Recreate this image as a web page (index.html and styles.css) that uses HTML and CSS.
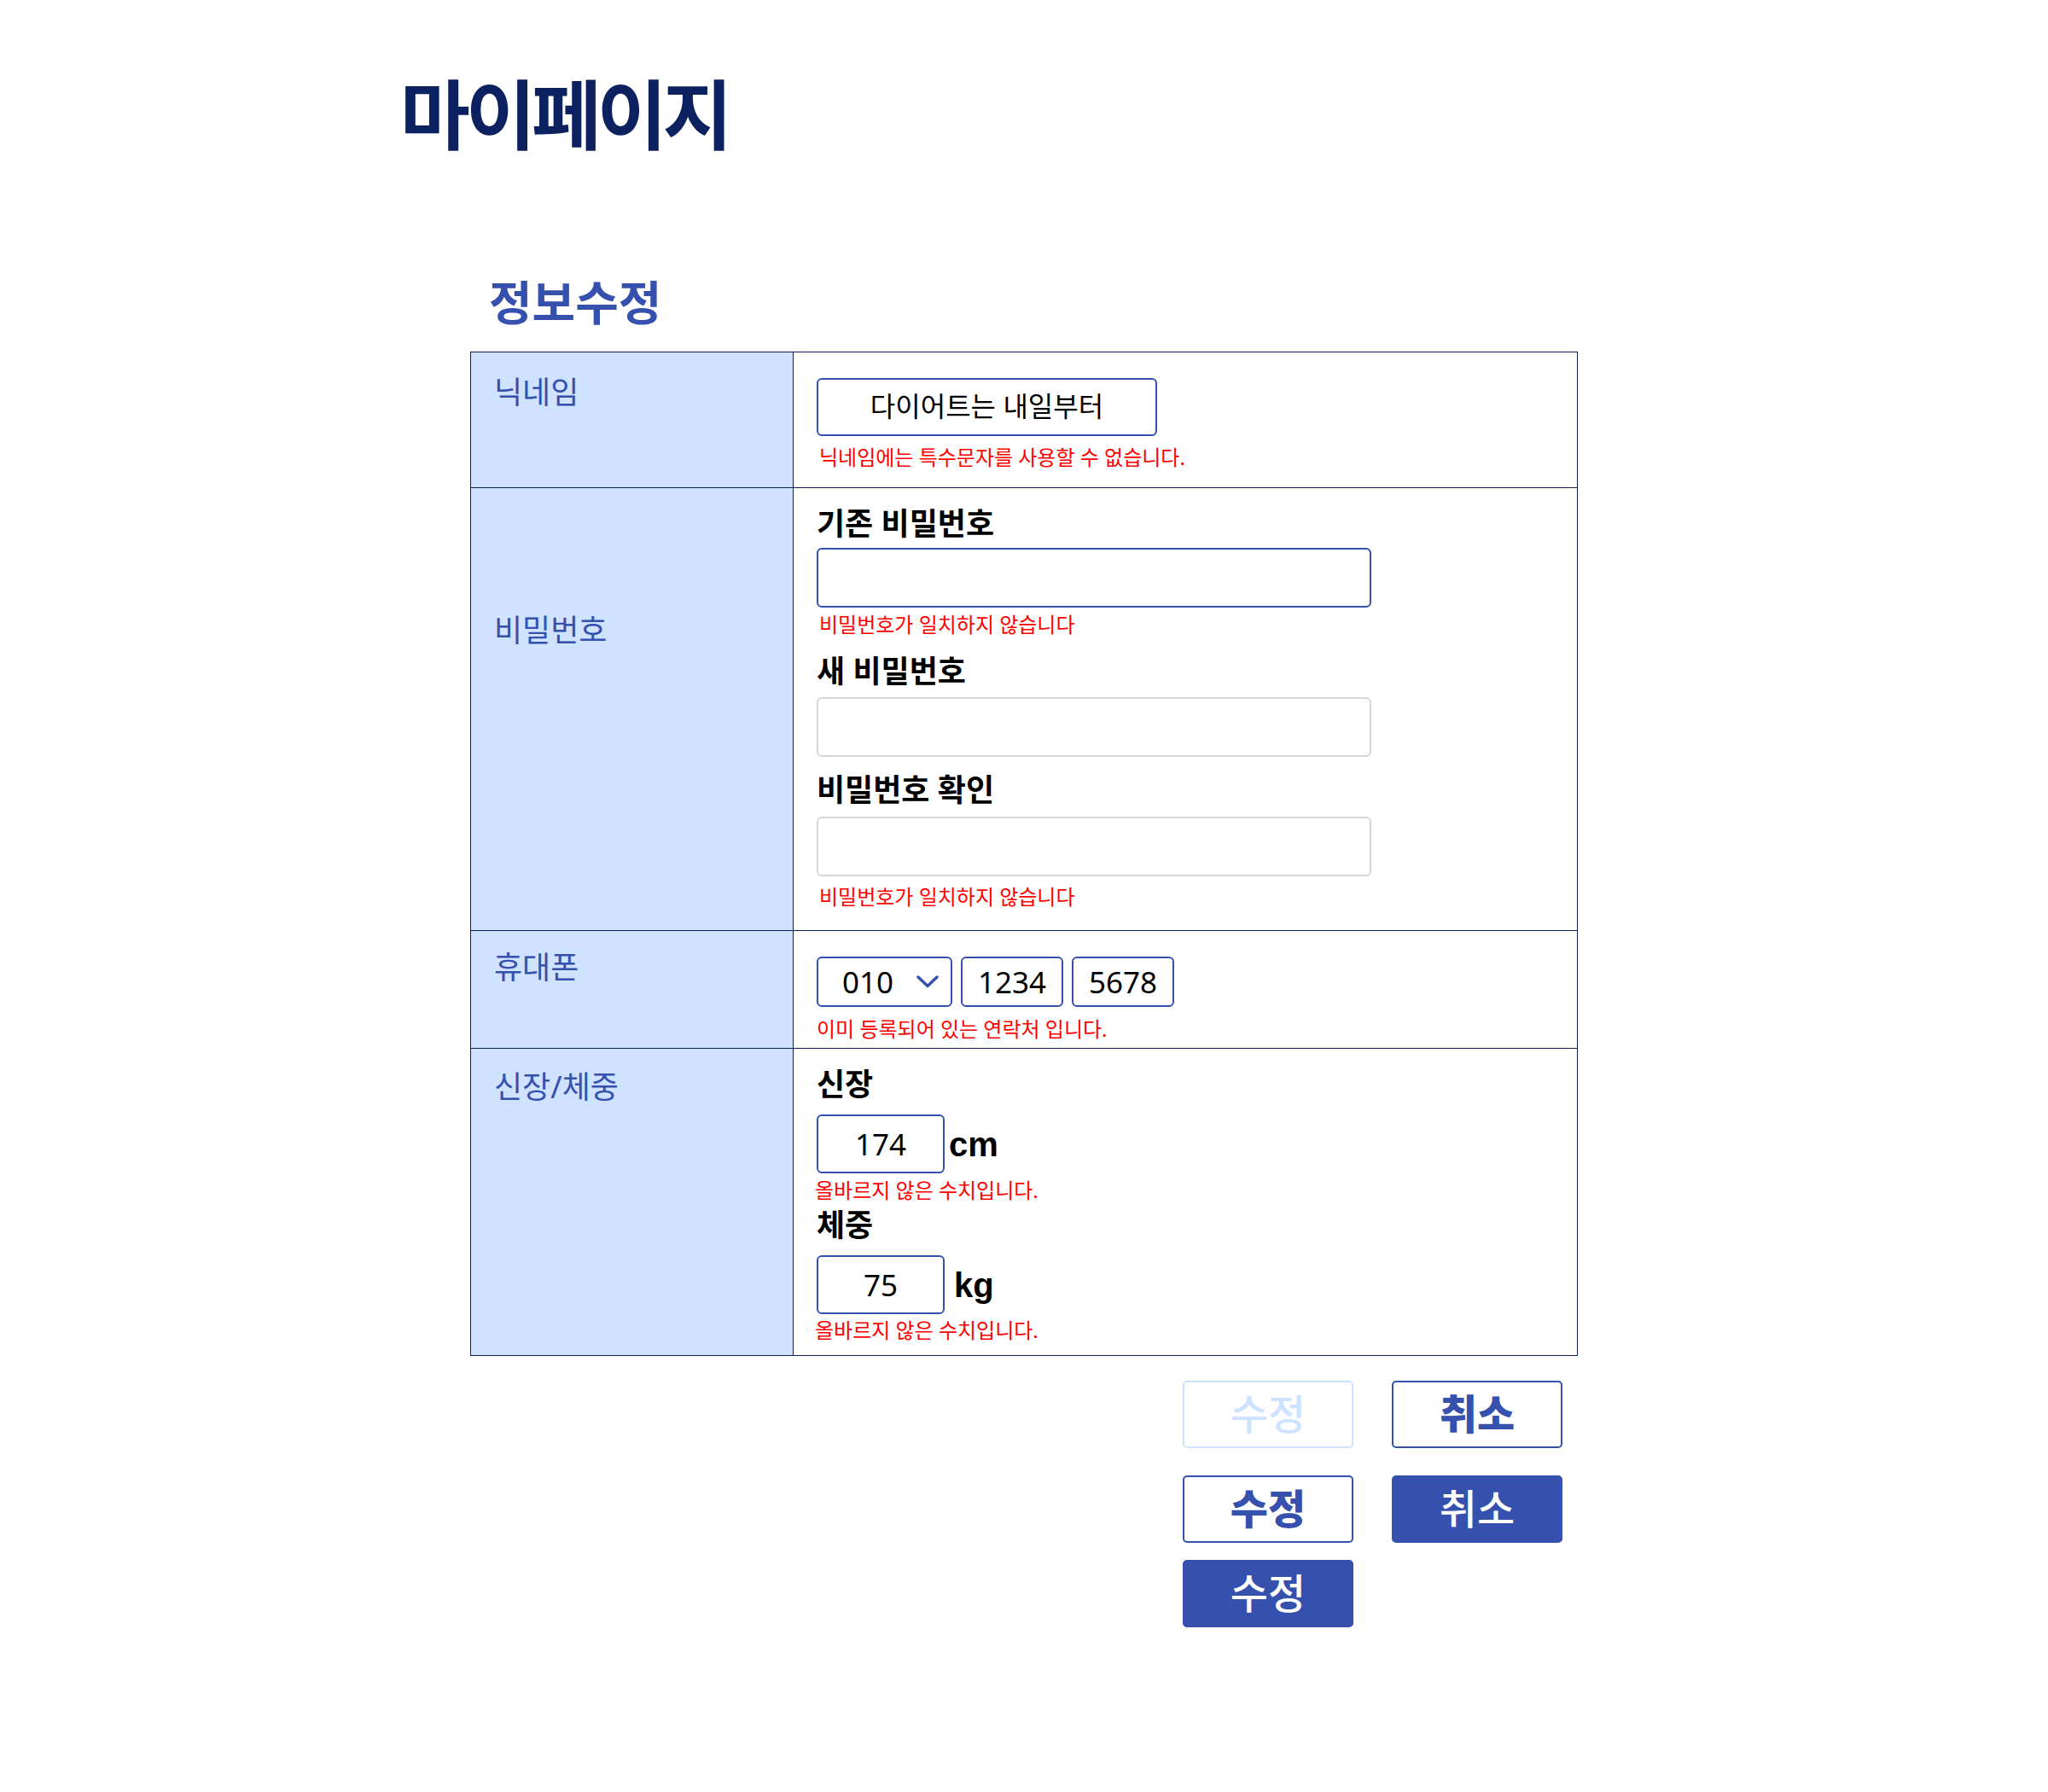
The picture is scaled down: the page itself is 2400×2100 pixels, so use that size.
FILE: index.html
```html
<!DOCTYPE html>
<html lang="ko">
<head>
<meta charset="utf-8">
<title>마이페이지</title>
<link rel="stylesheet" href="styles.css">
</head>
<body>
<div class="page">
  <h1 class="page-title">마이페이지</h1>

  <div class="edit">
    <h2 class="edit-title">정보수정</h2>

    <table class="info">
      <colgroup><col class="col-label"><col></colgroup>

      <tr class="row-nick">
        <th>닉네임</th>
        <td>
          <input class="field field-nick" type="text" value="다이어트는 내일부터">
          <p class="error error-nick">닉네임에는 특수문자를 사용할 수 없습니다.</p>
        </td>
      </tr>

      <tr class="row-pw">
        <th>비밀번호</th>
        <td>
          <p class="field-label">기존 비밀번호</p>
          <input class="field field-pw field-pw-first" type="password">
          <p class="error error-pw">비밀번호가 일치하지 않습니다</p>
          <p class="field-label field-label-next">새 비밀번호</p>
          <input class="field field-pw field-idle" type="password">
          <p class="field-label field-label-confirm">비밀번호 확인</p>
          <input class="field field-pw field-pw-last field-idle" type="password">
          <p class="error error-pw error-pw-last">비밀번호가 일치하지 않습니다</p>
        </td>
      </tr>

      <tr class="row-phone">
        <th>휴대폰</th>
        <td>
          <div class="phone">
            <div class="field phone-select">
              <span>010</span>
              <svg width="26" height="15" viewBox="0 0 26 15"><polyline points="2,2 13,12.5 24,2" fill="none" stroke="#3550ad" stroke-width="3.4" stroke-linecap="round" stroke-linejoin="round"/></svg>
            </div>
            <input class="field phone-part" type="text" value="1234">
            <input class="field phone-part" type="text" value="5678">
          </div>
          <p class="error error-phone">이미 등록되어 있는 연락처 입니다.</p>
        </td>
      </tr>

      <tr class="row-body">
        <th>신장/체중</th>
        <td>
          <p class="field-label">신장</p>
          <div class="measure">
            <input class="field field-num" type="text" value="174">
            <span class="unit">cm</span>
          </div>
          <p class="error error-num">올바르지 않은 수치입니다.</p>
          <p class="field-label field-label-weight">체중</p>
          <div class="measure">
            <input class="field field-num" type="text" value="75">
            <span class="unit unit-kg">kg</span>
          </div>
          <p class="error error-num error-num-last">올바르지 않은 수치입니다.</p>
        </td>
      </tr>
    </table>

    <div class="actions">
      <button class="btn btn-disabled btn-top" type="button">수정</button>
      <button class="btn btn-outline btn-top" type="button">취소</button>
      <button class="btn btn-outline" type="button">수정</button>
      <button class="btn btn-fill" type="button">취소</button>
      <button class="btn btn-fill" type="button">수정</button>
    </div>
  </div>
</div>
</body>
</html>
```

FILE: styles.css
```css
body {
  margin: 0;
  font-family: "Noto Sans", "Noto Sans CJK KR", sans-serif;
  color: #000;
  background: #fff;
}

.page {
  padding: 83px 0 120px 469px;
}

.page-title {
  margin: 0;
  font-size: 89px;
  line-height: 101px;
  font-weight: 700;
  letter-spacing: -5px;
  color: #0c2160;
}

.edit {
  width: 1298px;
  margin: 137px 0 0 82px;
}

.edit-title {
  margin: 0 0 25px 22px;
  font-size: 55px;
  line-height: 66px;
  font-weight: 700;
  color: #3550ad;
}

/* table */
.info {
  width: 1298px;
  table-layout: fixed;
  border-collapse: collapse;
  border: 1px solid #0a1f5c;
}

.col-label {
  width: 378px;
}

.info th,
.info td {
  border: 1px solid #0a1f5c;
  vertical-align: top;
  text-align: left;
  padding: 0 27px;
}

.info th {
  background: #cfe2ff;
  color: #3550ad;
  font-size: 36px;
  font-weight: 400;
  line-height: 44px;
}

.row-nick th { padding-top: 25px; }
.row-pw th { padding-top: 145px; }
.row-phone th { padding-top: 21px; }
.row-body th { padding-top: 23px; }

.row-nick td {
  padding-top: 30px;
  padding-bottom: 20px;
}

.row-pw td {
  padding-top: 20px;
  padding-bottom: 24px;
}

.row-phone td {
  padding-top: 30px;
  padding-bottom: 7px;
}

.row-body td {
  padding-top: 20px;
  padding-bottom: 14px;
}

p {
  margin: 0;
}

.field-label {
  font-size: 36px;
  line-height: 44px;
  font-weight: 700;
}

.field-label-next {
  margin-top: 18px;
}

.field-label-confirm {
  margin-top: 17px;
}

.field-label-weight {
  margin-top: 4px;
}

.error {
  font-size: 24px;
  line-height: 30px;
  color: #ff0000;
}

.error-nick {
  margin: 10px 0 0 3px;
}

.error-pw {
  margin: 5px 0 0 3px;
}

.error-pw-last {
  margin-top: 9px;
}

.error-phone {
  margin-top: 11px;
}

.error-num {
  margin: 5px 0 0 -2px;
}

.error-num-last {
  margin-top: 4px;
}

/* inputs */
.field {
  display: block;
  box-sizing: border-box;
  border: 2px solid #3550ad;
  border-radius: 6px;
  background: #fff;
  font-family: "Noto Sans", "Noto Sans CJK KR", sans-serif;
  font-size: 35px;
  color: #000;
  text-align: center;
  padding: 0;
  outline: none;
}

.field-nick {
  width: 399px;
  height: 68px;
  padding-bottom: 6px;
  font-size: 32px;
}

.field-pw {
  width: 650px;
  height: 70px;
  margin-top: 8px;
}

.field-pw-first {
  margin-top: 6px;
}

.field-pw-last {
  margin-top: 9px;
}

.field-idle {
  border-color: #d6d6d6;
}

.phone {
  display: flex;
  gap: 10px;
}

.phone-select {
  width: 159px;
  height: 59px;
  display: flex;
  align-items: center;
  justify-content: space-between;
  padding: 0 14px 0 28px;
}

.phone-select svg {
  display: block;
}

.phone-part {
  width: 120px;
  height: 59px;
}

.measure {
  display: flex;
  align-items: center;
  margin-top: 13px;
}

.field-num {
  width: 150px;
  height: 69px;
}

.unit {
  margin-left: 5px;
  font-family: "Liberation Sans", Arial, sans-serif;
  font-size: 40px;
  line-height: 1;
  font-weight: 700;
}

.unit-kg {
  margin-left: 11px;
}

/* buttons */
.actions {
  display: grid;
  grid-template-columns: 200px 200px;
  column-gap: 45px;
  row-gap: 20px;
  justify-content: end;
  margin: 29px 18px 0 0;
}

.btn {
  box-sizing: border-box;
  height: 79px;
  border: 2px solid #3550ad;
  border-radius: 5px;
  background: #fff;
  color: #3550ad;
  font-family: "Noto Sans CJK KR", sans-serif;
  font-size: 48px;
  line-height: 1;
  font-weight: 500;
  padding: 0 0 7px;
  display: flex;
  align-items: center;
  justify-content: center;
}

.btn-top {
  margin-bottom: 12px;
}

.btn-disabled {
  border-color: #cfe2ff;
  color: #cfe2ff;
}

.btn-outline {
  font-weight: 900;
}

.btn-fill {
  border: none;
  background: #3550ad;
  color: #fff;
}
```
